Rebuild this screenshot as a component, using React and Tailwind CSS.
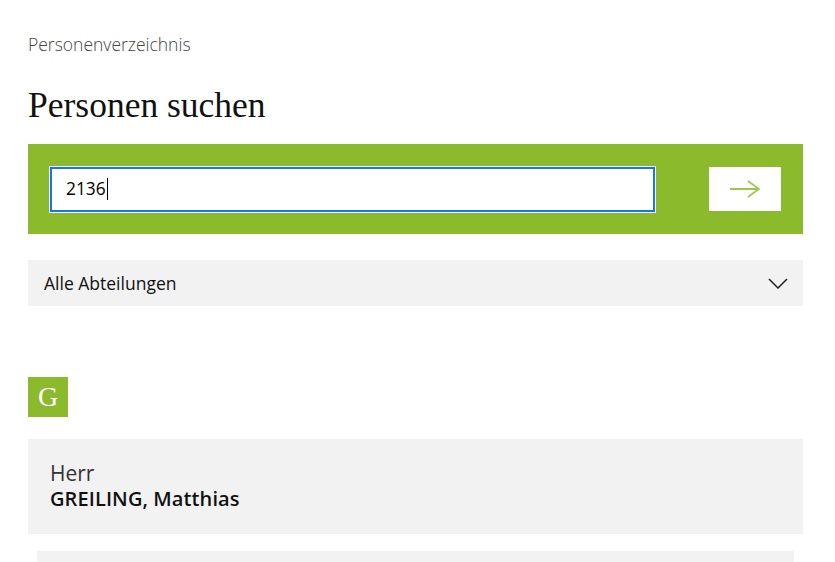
import React from "react";

const sans = { fontFamily: '"Open Sans", "Noto Sans", sans-serif' };

const App = () => {
    return (
        <div className="min-h-screen bg-white overflow-hidden" style={sans}>
            <div className="w-[775px] ml-[28px] pt-[33px]">
                <p className="text-[17.5px] leading-[22px] font-light text-[#444]">Personenverzeichnis</p>
                <h1 className="mt-[30px] text-[35.5px] leading-[40px] text-[#111] font-['Liberation_Serif',serif]">Personen suchen</h1>
                <div className="mt-[19px] h-[90px] bg-[#8bba2c] flex items-center pl-[21px] pr-[22px]">
                    <div className="w-[607px] h-[47px] bg-white border border-white outline-none">
                        <div className="h-full border-2 border-[#1477e6] flex items-center pl-[14px]">
                            <span className="text-[17.3px] text-black">2136</span>
                            <span className="w-px h-[22px] bg-black ml-[1px]" />
                        </div>
                    </div>
                    <div className="ml-auto w-[72px] h-[44px] bg-white flex items-center justify-center">
                        <svg width="32" height="18" viewBox="0 0 32 18" fill="none" stroke="#9cc84a" strokeWidth="2">
                            <path d="M1 9 H30" />
                            <path d="M19 1 L30 9 L19 17" strokeWidth="1.6" />
                        </svg>
                    </div>
                </div>
                <div className="mt-[26px] h-[46px] bg-[#f2f2f2] flex items-center justify-between pl-[16px] pr-[15px]">
                    <span className="text-[17.5px] text-[#111]">Alle Abteilungen</span>
                    <svg width="20" height="11" viewBox="0 0 20 11" fill="none" stroke="#222" strokeWidth="1.5">
                        <path d="M1 1 L10 10 L19 1" />
                    </svg>
                </div>
                <div className="mt-[71px] w-[40px] h-[40px] bg-[#8bba2c] flex items-center justify-center">
                    <span className="text-white text-[28px] leading-none font-['Liberation_Serif',serif]">G</span>
                </div>
                <div className="mt-[22px] h-[95px] bg-[#f2f2f2] flex flex-col justify-center pl-[22px] pb-[2px]">
                    <span className="text-[21px] leading-[25px] text-[#333]">Herr</span>
                    <span className="text-[20px] leading-[25px] font-semibold text-[#111] tracking-[0.1px]">GREILING, Matthias</span>
                </div>
                <div className="mt-[17px] mx-[9px] h-[60px] bg-[#f2f2f2]" />
            </div>
        </div>
    );
};

export default App;
